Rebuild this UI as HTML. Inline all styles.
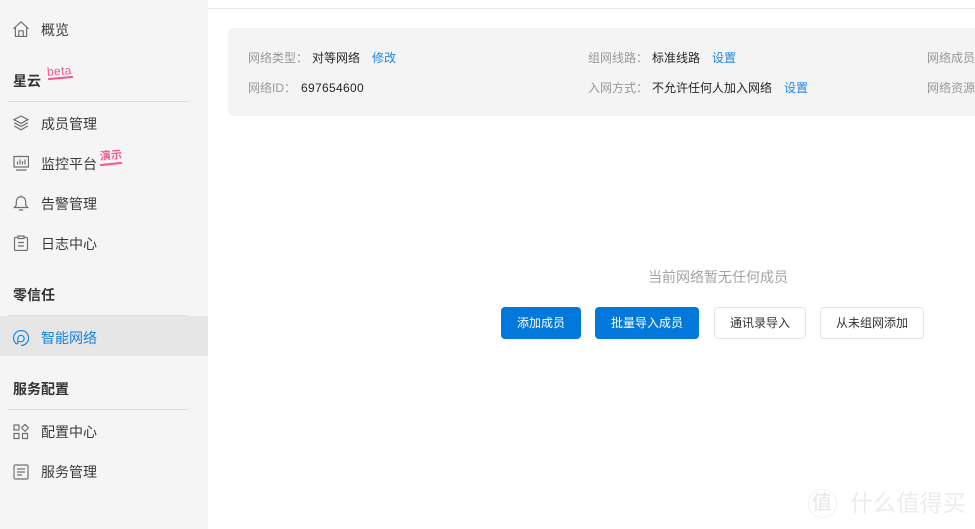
<!DOCTYPE html>
<html lang="zh-CN">
<head>
<meta charset="utf-8">
<title>智能网络</title>
<style>
html,body{margin:0;padding:0;width:975px;height:529px;overflow:hidden;background:#fff}
body{position:relative;font-family:"Liberation Sans","Noto Sans CJK SC",sans-serif;color:#333}
.a{position:absolute;white-space:nowrap}
#side{position:absolute;left:0;top:0;width:208px;height:529px;background:#f5f5f5}
#active{position:absolute;left:0;top:316px;width:208px;height:40px;background:#e6e6e6}
.m{font-size:14px;line-height:20px;left:41px;color:#3a3a3a}
.h{font-size:14px;line-height:20px;left:13px;font-weight:700;color:#333}
.ln{position:absolute;left:8px;width:180px;height:1px;background:#dcdcdc}
svg.i{position:absolute;left:13px;width:16px;height:16px;fill:none;stroke:#707070;stroke-width:1.2}
#top{position:absolute;left:208px;right:0;top:8px;height:1px;background:#e6e6e6}
#card{position:absolute;left:228px;top:28px;width:760px;height:88px;border-radius:6px;background:#f4f4f4}
.t{font-size:12px;line-height:18px}
.g{color:#999}.d{color:#262626}.b{color:#1f86e5}
.btn{position:absolute;top:307px;height:32px;box-sizing:border-box;border-radius:4px;font-size:12px;line-height:32px;text-align:center}
.p{background:#0278da;color:#fff}
.s{background:#fff;border:1px solid #e5e5e5;line-height:30px;color:#333}
</style>
</head>
<body>
<div id="side"></div>
<div id="active"></div>
<div id="top"></div>

<svg class="i" style="top:21px" viewBox="0 0 16 16"><path d="M.5 7.800 8 .8l7.500 7M2.400 6.400V15.500h11.200V6.400M5.800 15.500V9.800h4.400v5.700"/></svg>
<div class="a m" style="top:20px">概览</div>

<div class="a h" style="top:71px">星云</div>
<div class="a" style="left:47px;top:64px;font-size:12px;line-height:14px;letter-spacing:.3px;color:#f6558b;transform:rotate(-4deg)">beta</div>
<div class="a" style="left:48px;top:77px;width:25px;height:1.500px;background:#f6558b;transform:rotate(-5deg)"></div>
<div class="ln" style="top:101px"></div>

<svg class="i" style="top:115px" viewBox="0 0 16 16"><path d="M8 1 15 4.700 8 8.400 1 4.700ZM1.200 7.800 8 11.400l6.800-3.600M1.200 11 8 14.800 14.800 11"/></svg>
<div class="a m" style="top:114px">成员管理</div>

<svg class="i" style="top:155px" viewBox="0 0 16 16"><path d="M1 1.500h14.500v10.500H1ZM3 15h10.500M4.500 9.500V6.500M7 9.500V4.500M9.500 9.500V6M12 9.500V4.500"/></svg>
<div class="a m" style="top:154px">监控平台</div>
<div class="a" style="left:100px;top:149px;font-size:11px;line-height:14px;font-weight:700;color:#f6558b;transform:rotate(-5deg)">演示</div>
<div class="a" style="left:100px;top:163px;width:22px;height:1.500px;background:#f6558b;transform:rotate(-6deg)"></div>

<svg class="i" style="top:195px" viewBox="0 0 16 16"><path d="M8 1.800c-3 0-4.700 2.200-4.700 5v3.400L1.300 12.500h13.400l-2-2.300V6.800c0-2.800-1.700-5-4.700-5ZM8 .5v1.300M5.800 15h4.400"/></svg>
<div class="a m" style="top:194px">告警管理</div>

<svg class="i" style="top:235px" viewBox="0 0 16 16"><path d="M5 2.300H2.800A1.300 1.300 0 0 0 1.500 3.600v10.600a1.300 1.300 0 0 0 1.300 1.300h10.400a1.300 1.300 0 0 0 1.300-1.300V3.600a1.300 1.300 0 0 0-1.300-1.300H11M5 1h6v2.500H5ZM5 7.500h6M5 11h6"/></svg>
<div class="a m" style="top:234px">日志中心</div>

<div class="a h" style="top:285px">零信任</div>
<div class="ln" style="top:315px"></div>

<svg class="i" style="top:330px;stroke:#1f86e5" viewBox="0 0 16 16"><path d="M4 14.300A7.500 7.500 0 1 1 8 15.500"/><path d="M4.800 14V8.500a3.200 3.200 0 1 1 3.200 3.200H5.500"/></svg>
<div class="a m" style="top:328px;color:#1583e0">智能网络</div>

<div class="a h" style="top:379px">服务配置</div>
<div class="ln" style="top:409px"></div>

<svg class="i" style="top:424px" viewBox="0 0 16 16"><path d="M1 1h5v5H1ZM1 9.500h5v5H1ZM9.500 9.500h5v5h-5ZM12 .3l3.500 3.500L12 7.300 8.500 3.800Z"/></svg>
<div class="a m" style="top:422px">配置中心</div>

<svg class="i" style="top:464px" viewBox="0 0 16 16"><path d="M2.300 1h11.400A1.300 1.300 0 0 1 15 2.300v11.400a1.300 1.300 0 0 1-1.300 1.300H2.300A1.300 1.300 0 0 1 1 13.700V2.300A1.300 1.300 0 0 1 2.300 1ZM4 5h8M4 8h8M4 11h5"/></svg>
<div class="a m" style="top:462px">服务管理</div>

<div id="card"></div>
<div class="a t g" style="left:248px;top:49px">网络类型：</div>
<div class="a t d" style="left:312px;top:49px">对等网络</div>
<div class="a t b" style="left:372px;top:49px">修改</div>
<div class="a t g" style="left:248px;top:79px">网络ID：</div>
<div class="a t d" style="left:301px;top:79px;letter-spacing:.33px">697654600</div>
<div class="a t g" style="left:588px;top:49px">组网线路：</div>
<div class="a t d" style="left:652px;top:49px">标准线路</div>
<div class="a t b" style="left:712px;top:49px">设置</div>
<div class="a t g" style="left:588px;top:79px">入网方式：</div>
<div class="a t d" style="left:652px;top:79px">不允许任何人加入网络</div>
<div class="a t b" style="left:784px;top:79px">设置</div>
<div class="a t g" style="left:927px;top:49px">网络成员</div>
<div class="a t g" style="left:927px;top:79px">网络资源</div>

<div class="a" style="left:648px;top:267px;font-size:14px;line-height:20px;color:#a3a3a3">当前网络暂无任何成员</div>
<div class="btn p" style="left:501px;width:80px">添加成员</div>
<div class="btn p" style="left:595px;width:104px">批量导入成员</div>
<div class="btn s" style="left:714px;width:92px">通讯录导入</div>
<div class="btn s" style="left:820px;width:104px">从未组网添加</div>

<div class="a" style="left:808px;top:489px;width:29px;height:29px;box-sizing:border-box;border:1px solid #f2f2f2;border-radius:50%"></div>
<div class="a" style="left:812px;top:490px;font-size:20px;line-height:26px;color:#e6e6e6">值</div>
<div class="a" style="left:850px;top:490px;font-size:23px;line-height:26px;color:#ececec;letter-spacing:.2px">什么值得买</div>
</body>
</html>
